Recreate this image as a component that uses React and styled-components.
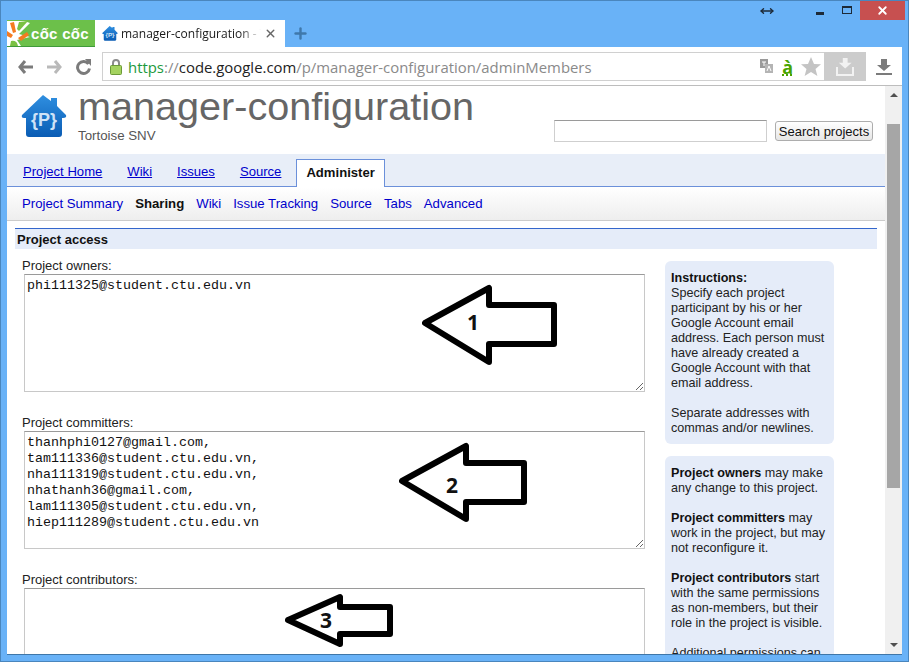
import styled, { createGlobalStyle } from "styled-components";
import { X, Plus, MoveHorizontal } from "lucide-react";

const GlobalStyle = createGlobalStyle`
  html, body {
    margin: 0;
    height: 100%;
    overflow: hidden;
    background: #69b2f7;
    font-family: "Liberation Sans", Arial, sans-serif;
  }
  a {
    color: #0000cc;
  }
`;

const owners = "phi111325@student.ctu.edu.vn";
const committers = `thanhphi0127@gmail.com,
tam111336@student.ctu.edu.vn,
nha111319@student.ctu.edu.vn,
nhathanh36@gmail.com,
lam111305@student.ctu.edu.vn,
hiep111289@student.ctu.edu.vn`;

const projectTabs = ["Project Home", "Wiki", "Issues", "Source"];
const subLinks = ["Project Summary", "Sharing", "Wiki", "Issue Tracking", "Source", "Tabs", "Advanced"];

const HouseLogo = ({ size }) => (
  <svg width={size} height={size * 0.94} viewBox="0 0 46 43">
    <defs>
      <linearGradient id="house" x1="0" y1="0" x2="0" y2="1">
        <stop offset="0" stopColor="#2f8fe0" />
        <stop offset="1" stopColor="#0a5cb4" />
      </linearGradient>
    </defs>
    <path
      d="M22 0 L30 6 V3 H36 V11 L45 20 Q46 23 42 23 H41 V39 Q41 42 38 42 H8 Q5 42 5 39 V23 H3 Q0 23 1 20 Z"
      fill="url(#house)"
    />
    <text x="23" y="31" textAnchor="middle" fontFamily="Liberation Sans, sans-serif" fontWeight="700" fontSize="18" fill="#cfe3f7">
      {"{P}"}
    </text>
  </svg>
);

const CocCocLeaf = () => (
  <svg width="23" height="26" viewBox="0 0 23 26">
    <path d="M0 1 H17 L23 3 L12 14 L23 17 L10 20 L14 26 H0 Z" fill="#fff" />
    <path d="M3 3 L7 2 L9 12 L6 13 Z" fill="#f47b20" />
    <path d="M0 11 L6 15 L4 18 L0 16 Z" fill="#f47b20" />
    <path d="M11 18 L20 12 L22 15 L14 21 Z" fill="#f47b20" />
    <path d="M12 2 L21 1 L12 11 L10 9 Z" fill="#7ac143" />
    <path d="M4 21 Q10 20 11 26 H3 Z" fill="#7ac143" />
  </svg>
);

const NavArrow = ({ color, flip }) => (
  <svg width="15" height="14" viewBox="0 0 15 14" style={flip ? { transform: "scaleX(-1)" } : undefined}>
    <path d="M7 1 L2 7 L7 13 M2 7 H15" fill="none" stroke={color} strokeWidth="3" />
  </svg>
);

const PointerArrow = ({ points, left, top, width, height, label, labelX, labelY }) => (
  <ArrowSvg $left={left} $top={top} width={width} height={height} viewBox={`0 0 ${width} ${height}`}>
    <polygon points={points} fill="#fff" stroke="#000" strokeWidth="6" strokeLinejoin="round" />
    <text x={labelX} y={labelY} textAnchor="middle" fontFamily="Noto Sans, sans-serif" fontWeight="700" fontSize="21" fill="#111">
      {label}
    </text>
  </ArrowSvg>
);

const App = () => {
  return (
    <Win>
      <GlobalStyle />
      <TitleBar>
        <MoveHorizontal size={14} strokeWidth={2.4} color="#1d2a38" />
        <Controls>
          <WinButton><MinimizeBar /></WinButton>
          <WinButton><MaximizeBox /></WinButton>
          <CloseButton><X size={13} strokeWidth={3.4} color="#fff" /></CloseButton>
        </Controls>
      </TitleBar>

      <TabStrip>
        <BrandTab>
          <CocCocLeaf />
          <BrandName>cốc cốc</BrandName>
        </BrandTab>
        <ActiveBrowserTab>
          <HouseLogo size={16} />
          <TabTitle>manager-configuration - Tortoise</TabTitle>
          <X size={13} strokeWidth={2.6} color="#666" />
        </ActiveBrowserTab>
        <NewTab><Plus size={17} strokeWidth={3.4} color="#3f78ab" /></NewTab>
      </TabStrip>

      <Toolbar>
        <ToolIcon><NavArrow color="#7b7b7b" /></ToolIcon>
        <ToolIcon><NavArrow color="#b9b9b9" flip /></ToolIcon>
        <ToolIcon>
          <svg width="15" height="16" viewBox="0 0 15 16">
            <path d="M12.5 5 A6 6 0 1 0 13.5 9.5" fill="none" stroke="#7b7b7b" strokeWidth="3" />
            <path d="M9 0 L15 0 V7 Z" fill="#7b7b7b" />
          </svg>
        </ToolIcon>
        <AddressBox>
          <svg width="12" height="16" viewBox="0 0 12 16">
            <path d="M3 7 V4 a3 3 0 0 1 6 0 V7" fill="none" stroke="#8c8c8c" strokeWidth="2" />
            <rect x="0.5" y="6.5" width="11" height="9" rx="1" fill="#a4d35f" stroke="#6c9a38" />
          </svg>
          <Url>
            <UrlScheme>https</UrlScheme>
            <UrlDim>://</UrlDim>
            <UrlHost>code.google.com</UrlHost>
            <UrlDim>/p/manager-configuration/adminMembers</UrlDim>
          </Url>
          <AddressIcons>
            <svg width="15" height="15" viewBox="0 0 15 15">
              <rect x="1" y="0" width="8" height="9" fill="#9a9a9a" />
              <rect x="6" y="5" width="8" height="9" fill="#b4b4b4" />
              <path d="M8 12 L10 7 L12 12" fill="none" stroke="#fff" />
              <path d="M3 3 H7 M5 3 V7" stroke="#fff" />
            </svg>
            <GreenLetter>à</GreenLetter>
            <svg width="20" height="19" viewBox="0 0 20 19">
              <path d="M10 0 L13 7 L20 7.3 L14.5 12 L16.4 19 L10 15 L3.6 19 L5.5 12 L0 7.3 L7 7 Z" fill="#c4c4c4" />
            </svg>
          </AddressIcons>
          <SavePill>
            <svg width="18" height="18" viewBox="0 0 18 18">
              <path d="M6 0 H12 V6 H17 L9 13 L1 6 H6 Z" fill="#f2f2f2" transform="translate(2 0) scale(.8)" />
              <path d="M1 9 V17 H17 V9" fill="none" stroke="#f2f2f2" strokeWidth="2" />
            </svg>
          </SavePill>
        </AddressBox>
        <DownloadSlot>
          <svg width="16" height="16" viewBox="0 0 16 16">
            <path d="M5 0 H11 V6 H15 L8 12 L1 6 H5 Z" fill="#7b7b7b" />
            <rect x="0" y="14" width="16" height="2" fill="#7b7b7b" />
          </svg>
        </DownloadSlot>
      </Toolbar>

      <Viewport>
        <Page>
          <Header>
            <HouseLogo size={46} />
            <TitleBlock>
              <ProjectName>manager-configuration</ProjectName>
              <ProjectSummary>Tortoise SNV</ProjectSummary>
            </TitleBlock>
            <SearchForm>
              <SearchInput />
              <SearchButton>Search projects</SearchButton>
            </SearchForm>
          </Header>

          <MainTabs>
            {projectTabs.map((t) => (
              <MainTab key={t} href="#">{t}</MainTab>
            ))}
            <CurrentTab>Administer</CurrentTab>
          </MainTabs>

          <SubNav>
            {subLinks.map((l) =>
              l === "Sharing" ? <b key={l}>{l}</b> : <a key={l} href="#">{l}</a>
            )}
          </SubNav>

          <SectionTitle>Project access</SectionTitle>

          <Columns>
            <Form>
              <Field>
                <FieldLabel>Project owners:</FieldLabel>
                <MemberBox readOnly defaultValue={owners} />
                <PointerArrow
                  points="3,41 67,6 67,23 132,23 132,62 67,62 67,80"
                  left={398}
                  top={25}
                  width={136}
                  height={86}
                  label="1"
                  labelX={51}
                  labelY={48}
                />
              </Field>
              <Field>
                <FieldLabel>Project committers:</FieldLabel>
                <MemberBox readOnly defaultValue={committers} />
                <PointerArrow
                  points="3,41 67,6 67,23 125,23 125,62 67,62 67,79"
                  left={375}
                  top={26}
                  width={130}
                  height={86}
                  label="2"
                  labelX={53}
                  labelY={53}
                />
              </Field>
              <Field>
                <FieldLabel>Project contributors:</FieldLabel>
                <MemberBox readOnly />
                <PointerArrow
                  points="3,28 55,5 55,15 105,15 105,42 55,42 55,52"
                  left={261}
                  top={21}
                  width={108}
                  height={56}
                  label="3"
                  labelX={41}
                  labelY={36}
                />
              </Field>
            </Form>

            <Side>
              <Note>
                <b>Instructions:</b>
                <br />
                Specify each project participant by his or her Google Account email address. Each person must have already created a Google Account with that email address.
                <br />
                <br />
                Separate addresses with commas and/or newlines.
              </Note>
              <Note>
                <b>Project owners</b> may make any change to this project.
                <br />
                <br />
                <b>Project committers</b> may work in the project, but may not reconfigure it.
                <br />
                <br />
                <b>Project contributors</b> start with the same permissions as non-members, but their role in the project is visible.
                <br />
                <br />
                Additional permissions can be granted.
              </Note>
            </Side>
          </Columns>
        </Page>

        <Scrollbar>
          <ScrollUp />
          <Thumb />
          <ScrollDown />
        </Scrollbar>
      </Viewport>
    </Win>
  );
};

const Win = styled.div`
  box-sizing: border-box;
  width: 909px;
  height: 662px;
  padding: 0 6px 6px;
  border: 1px solid #4a86bd;
  display: flex;
  flex-direction: column;
  background: #69b2f7;
  overflow: hidden;
`;

const TitleBar = styled.div`
  height: 19px;
  flex: none;
  display: flex;
  align-items: center;
  justify-content: flex-end;
  gap: 32px;
`;

const Controls = styled.div`
  display: flex;
  align-items: center;
  margin-right: -3px;
  height: 100%;
`;

const WinButton = styled.div`
  width: 27px;
  height: 19px;
  display: flex;
  align-items: center;
  justify-content: center;
`;

const MinimizeBar = styled.div`
  width: 8px;
  height: 3px;
  margin-top: 5px;
  background: #1d2a38;
`;

const MaximizeBox = styled.div`
  box-sizing: border-box;
  width: 10px;
  height: 8px;
  margin-top: -1px;
  border: 1px solid #1d2a38;
  border-top-width: 2px;
`;

const CloseButton = styled(WinButton)`
  width: 45px;
  background: #c75050;
`;

const TabStrip = styled.div`
  height: 27px;
  flex: none;
  display: flex;
  align-items: stretch;
`;

const BrandTab = styled.div`
  width: 88px;
  box-sizing: border-box;
  display: flex;
  align-items: center;
  background: #6cc04a;
  border-bottom: 1px solid #3f9a3a;
  overflow: hidden;
`;

const BrandName = styled.span`
  margin-left: 1px;
  font: 700 15px "Liberation Sans", sans-serif;
  letter-spacing: 0.3px;
  color: #fff;
  white-space: nowrap;
`;

const ActiveBrowserTab = styled.div`
  width: 190px;
  box-sizing: border-box;
  padding: 0 8px 0 7px;
  display: flex;
  align-items: center;
  gap: 3px;
  background: #fff;
`;

const TabTitle = styled.span`
  flex: 1;
  overflow: hidden;
  white-space: nowrap;
  font: 12px "Open Sans", sans-serif;
  color: #1a1a1a;
  -webkit-mask-image: linear-gradient(90deg, #000 85%, transparent 100%);
  mask-image: linear-gradient(90deg, #000 85%, transparent 100%);
`;

const NewTab = styled.div`
  margin-left: 7px;
  display: flex;
  align-items: center;
`;

const Toolbar = styled.div`
  height: 38px;
  flex: none;
  box-sizing: border-box;
  padding: 5px 0 4px 4px;
  display: flex;
  align-items: center;
  background: #fff;
`;

const ToolIcon = styled.div`
  width: 29px;
  display: flex;
  justify-content: center;
`;

const AddressBox = styled.div`
  flex: 1;
  height: 100%;
  box-sizing: border-box;
  margin-left: 4px;
  padding-left: 7px;
  display: flex;
  align-items: center;
  border: 1px solid #d0d0d0;
  border-right: 0;
`;

const Url = styled.div`
  margin-left: 6px;
  font: 14.9px "Open Sans", sans-serif;
  white-space: nowrap;
`;

const UrlScheme = styled.span`
  color: #1c9a3e;
`;

const UrlDim = styled.span`
  color: #8a8a8a;
`;

const UrlHost = styled.span`
  color: #222;
`;

const AddressIcons = styled.div`
  margin-left: auto;
  display: flex;
  align-items: center;
  gap: 8px;
  padding-right: 3px;
`;

const GreenLetter = styled.span`
  font: 700 18px "Noto Sans", sans-serif;
  color: #49a400;
  text-decoration: underline dotted;
`;

const SavePill = styled.div`
  width: 42px;
  height: 29px;
  display: flex;
  align-items: center;
  justify-content: center;
  background: #cccccc;
`;

const DownloadSlot = styled.div`
  width: 36px;
  display: flex;
  justify-content: center;
`;

const Viewport = styled.div`
  flex: 1;
  min-height: 0;
  display: flex;
  background: #fff;
  border-top: 1px solid #bdbdbd;
  border-bottom: 1px solid #3f76a8;
`;

const Page = styled.div`
  flex: 1;
  min-width: 0;
  overflow: hidden;
`;

const Header = styled.div`
  height: 68px;
  box-sizing: border-box;
  padding: 9px 12px 0 14px;
  display: flex;
  align-items: flex-start;
`;

const TitleBlock = styled.div`
  margin-left: 11px;
  margin-top: -10px;
`;

const ProjectName = styled.div`
  font-size: 39.6px;
  line-height: 42px;
  color: #666;
  white-space: nowrap;
`;

const ProjectSummary = styled.div`
  margin-top: 1px;
  font-size: 13.3px;
  line-height: 16px;
  color: #555;
`;

const SearchForm = styled.div`
  margin-left: auto;
  margin-top: 25px;
  display: flex;
  align-items: center;
  gap: 8px;
`;

const SearchInput = styled.input`
  box-sizing: border-box;
  width: 213px;
  height: 22px;
  border: 1px solid #ababab;
  border-color: #9a9a9a #cfcfcf #cfcfcf #cfcfcf;
`;

const SearchButton = styled.button`
  box-sizing: border-box;
  width: 98px;
  height: 20px;
  padding: 0;
  border: 1px solid #adadad;
  border-radius: 3px;
  background: linear-gradient(#ffffff, #e6e6e6);
  font: 13px "Liberation Sans", sans-serif;
  color: #111;
`;

const MainTabs = styled.div`
  height: 33px;
  box-sizing: border-box;
  padding: 5px 0 0 16px;
  display: flex;
  align-items: flex-end;
  gap: 25px;
  background: #e8eef8;
  border-bottom: 1px solid #6b90da;
`;

const MainTab = styled.a`
  font-size: 13.1px;
  line-height: 28px;
`;

const CurrentTab = styled.div`
  margin: 0 0 -1px -10px;
  height: 28px;
  box-sizing: border-box;
  padding: 0 9px;
  background: #fff;
  border: 1px solid #6b90da;
  border-bottom: 0;
  font-size: 13.1px;
  font-weight: 700;
  line-height: 26px;
  color: #111;
`;

const SubNav = styled.div`
  height: 34px;
  box-sizing: border-box;
  padding-left: 15px;
  display: flex;
  align-items: center;
  gap: 12px;
  background: linear-gradient(#ffffff, #eeeeee);
  border-bottom: 1px solid #cccccc;
  font-size: 13.2px;

  a {
    text-decoration: none;
  }

  b {
    color: #111;
  }
`;

const SectionTitle = styled.div`
  margin: 7px 8px 0;
  height: 21px;
  box-sizing: border-box;
  padding-left: 2px;
  background: #e5ecf9;
  border-top: 1px solid #3366cc;
  font-size: 13px;
  font-weight: 700;
  line-height: 21px;
  color: #111;
`;

const Columns = styled.div`
  padding: 12px 0 0 17px;
  display: flex;
  gap: 20px;
`;

const Form = styled.div`
  width: 621px;
  display: flex;
  flex-direction: column;
  margin-top: -4px;
`;

const Field = styled.div`
  position: relative;
  height: 157px;
`;

const FieldLabel = styled.div`
  margin-left: -2px;
  font-size: 13px;
  line-height: 17px;
  color: #222;
`;

const MemberBox = styled.textarea`
  display: block;
  box-sizing: border-box;
  width: 621px;
  height: 118px;
  margin: 0;
  padding: 3px 2px 2px;
  border: 1px solid #c8c8c8;
  border-top-color: #9a9a9a;
  border-radius: 0;
  outline: none;
  font: 13.33px/16px "Liberation Mono", monospace;
  color: #111;
`;

const ArrowSvg = styled.svg`
  position: absolute;
  left: ${(p) => p.$left}px;
  top: ${(p) => p.$top}px;
`;

const Side = styled.div`
  width: 169px;
  display: flex;
  flex-direction: column;
  gap: 12px;
`;

const Note = styled.div`
  padding: 10px 6px 8px;
  background: #e5ecf9;
  border-radius: 6px;
  font-size: 12.6px;
  line-height: 15px;
  color: #222;

  b {
    color: #111;
  }
`;

const Scrollbar = styled.div`
  width: 17px;
  flex: none;
  display: flex;
  flex-direction: column;
  align-items: center;
  background: #f0f0f0;
`;

const ScrollUp = styled.div`
  margin-top: 7px;
  width: 0;
  height: 0;
  border: 4px solid transparent;
  border-top: 0;
  border-bottom: 4px solid #505050;
`;

const Thumb = styled.div`
  margin-top: 27px;
  width: 13px;
  height: 364px;
  background: #a6a6a6;
`;

const ScrollDown = styled.div`
  margin-top: auto;
  margin-bottom: 7px;
  width: 0;
  height: 0;
  border: 4px solid transparent;
  border-bottom: 0;
  border-top: 4px solid #505050;
`;

export default App;
